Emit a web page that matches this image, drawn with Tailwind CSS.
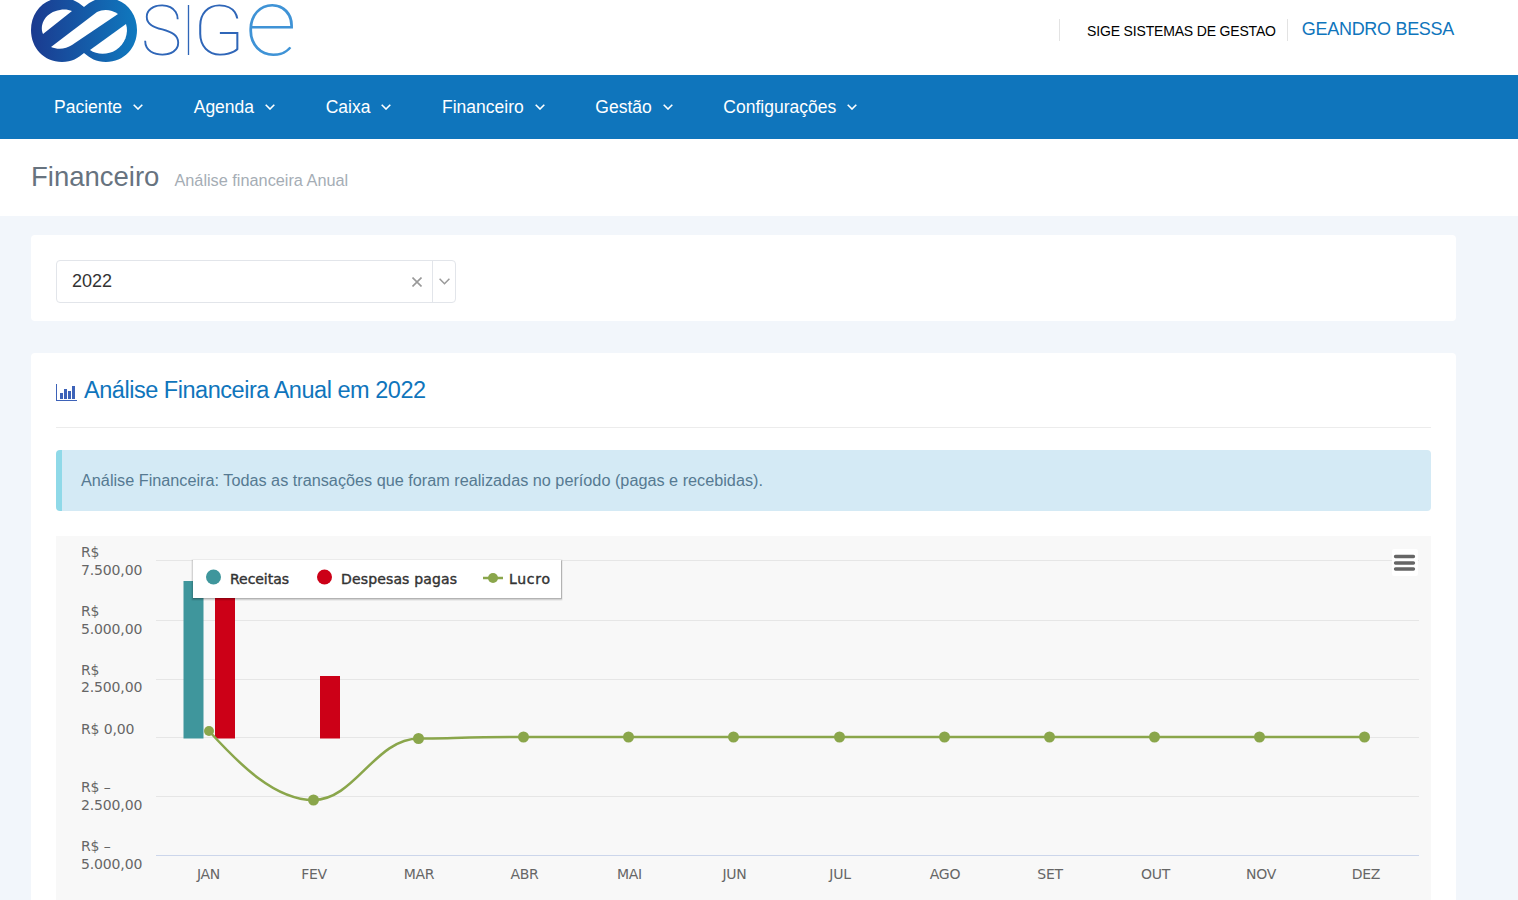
<!DOCTYPE html>
<html lang="pt-BR">
<head>
    <meta charset="UTF-8">
    <title>SIGE - Financeiro</title>
    <script src="https://cdn.jsdelivr.net/npm/@tailwindcss/browser@4"></script>
</head>
<body class="h-[900px] overflow-hidden bg-[#f2f6fb] font-['Liberation_Sans',Arial,sans-serif]">
    <!-- topo -->
    <header class="h-[75px] bg-white flex justify-between pl-[31px] pr-[64px]">
        <svg class="w-[270px] h-[75px]" viewBox="31 0 270 75">
            <defs>
                <linearGradient id="logoGrad" x1="0" x2="1" y1="0" y2="0">
                    <stop offset="0" stop-color="#1b3a8f"/>
                    <stop offset="1" stop-color="#0f79bf"/>
                </linearGradient>
            </defs>
            <path fill="url(#logoGrad)" d="M62 -2C44 -2 31 12 31 30C31 48 44 62 62 62C72 62 78 58 84 53C90 58 96 62 106 62C124 62 137 48 137 30C137 12 124 -2 106 -2C96 -2 90 2 84 7C78 2 72 -2 62 -2Z"/>
            <path fill="#fff" d="M43 34C39 24 46 12 60 10C65 9 69 10 72 11Z"/>
            <path fill="#fff" d="M51 47C58 50 66 49 72 45L118 14C111 9 103 9 97 12Z"/>
            <path fill="#fff" d="M90 50C97 55 108 55 116 50C125 44 129 33 126 24Z"/>
            <text y="55" font-size="70" font-weight="100" fill="#2f66b8" class="font-['Roboto',sans-serif]"><tspan x="141" textLength="41" lengthAdjust="spacingAndGlyphs">S</tspan><tspan x="182" textLength="13" lengthAdjust="spacingAndGlyphs">I</tspan><tspan x="193" textLength="52" lengthAdjust="spacingAndGlyphs">G</tspan><tspan x="245" font-size="95" fill="#3f93d6" textLength="52" lengthAdjust="spacingAndGlyphs">e</tspan></text>
        </svg>
        <div class="flex items-start pt-[19px]">
            <div class="h-[22px] border-l border-[#e3e3e3] pl-[27px] pr-[11px] pt-[4px] text-[14px] tracking-[-0.17px] leading-[16px] text-black">SIGE SISTEMAS DE GESTAO</div>
            <div class="h-[22px] border-l border-[#e3e3e3] pl-[14px] text-[18px] tracking-[-0.3px] leading-[20px] text-[#0f75bc]">GEANDRO BESSA</div>
        </div>
    </header>

    <!-- menu -->
    <nav class="h-[64px] bg-[#0f75bc] flex items-center gap-[50.6px] pl-[54px] text-white text-[17.5px]">
        <a class="flex items-center gap-[11px]">Paciente <svg class="w-[10px] h-[6px]" viewBox="0 0 10 6" fill="none" stroke="currentColor" stroke-width="1.6"><path d="M.7.7 5 5 9.3.7"/></svg></a>
        <a class="flex items-center gap-[11px]">Agenda <svg class="w-[10px] h-[6px]" viewBox="0 0 10 6" fill="none" stroke="currentColor" stroke-width="1.6"><path d="M.7.7 5 5 9.3.7"/></svg></a>
        <a class="flex items-center gap-[11px]">Caixa <svg class="w-[10px] h-[6px]" viewBox="0 0 10 6" fill="none" stroke="currentColor" stroke-width="1.6"><path d="M.7.7 5 5 9.3.7"/></svg></a>
        <a class="flex items-center gap-[11px]">Financeiro <svg class="w-[10px] h-[6px]" viewBox="0 0 10 6" fill="none" stroke="currentColor" stroke-width="1.6"><path d="M.7.7 5 5 9.3.7"/></svg></a>
        <a class="flex items-center gap-[11px]">Gestão <svg class="w-[10px] h-[6px]" viewBox="0 0 10 6" fill="none" stroke="currentColor" stroke-width="1.6"><path d="M.7.7 5 5 9.3.7"/></svg></a>
        <a class="flex items-center gap-[11px]">Configurações <svg class="w-[10px] h-[6px]" viewBox="0 0 10 6" fill="none" stroke="currentColor" stroke-width="1.6"><path d="M.7.7 5 5 9.3.7"/></svg></a>
    </nav>

    <!-- titulo da pagina -->
    <div class="h-[77px] bg-white flex items-baseline gap-[15px] pl-[31px] pt-[21px]">
        <h1 class="text-[27.5px] leading-[34px] text-[#67737f]">Financeiro</h1>
        <span class="text-[16.3px] text-[#a5adb5]">Análise financeira Anual</span>
    </div>

    <main class="w-[1425px] ml-[31px] pt-[19px] flex flex-col gap-[32px]">
        <section class="h-[86px] bg-white rounded-[4px] pt-[25px] pl-[25px]">
            <div class="w-[400px] h-[43px] flex items-center border border-[#e2e5ea] rounded-[4px] pl-[15px] text-[18px] text-[#333]">
                <span class="flex-1">2022</span>
                <svg class="w-[10px] h-[10px] mr-[10px] text-[#999]" viewBox="0 0 10 10" fill="none" stroke="currentColor" stroke-width="1.6"><path d="M.5.5l9 9M9.5.5l-9 9"/></svg>
                <div class="w-[23px] h-full border-l border-[#e2e5ea] flex items-center justify-center">
                    <svg class="w-[11px] h-[7px] text-[#999]" viewBox="0 0 11 7" fill="none" stroke="currentColor" stroke-width="1.5"><path d="M.6.8 5.5 5.7 10.4.8"/></svg>
                </div>
            </div>
        </section>

        <section class="bg-white rounded-[4px] px-[25px] pt-[23px] h-[700px]">
            <div class="h-[52px] flex items-start gap-[7px] border-b border-[#ececec]">
                <svg class="w-[21px] h-[17px] mt-[8px] text-[#3d62b8]" viewBox="0 0 21 17" fill="currentColor">
                    <path d="M0 0h1v16h20v1H0z"/>
                    <rect x="4" y="9" width="3" height="6"/>
                    <rect x="8" y="5" width="3" height="10"/>
                    <rect x="12" y="7" width="3" height="8"/>
                    <rect x="16" y="2" width="3" height="13"/>
                </svg>
                <h2 class="text-[23.5px] tracking-[-0.47px] leading-[28px] text-[#0f75bc]">Análise Financeira Anual em 2022</h2>
            </div>
            <div class="mt-[22px] h-[61px] flex items-center bg-[#d4eaf5] border-l-[6px] border-[#8fd9e8] rounded-[4px] pl-[19px] text-[16.24px] text-[#567a92]">
                Análise Financeira: Todas as transações que foram realizadas no período (pagas e recebidas).
            </div>

            <!-- grafico -->
            <svg class="mt-[25px] block w-[1375px] h-[400px] bg-[#f8f8f8] font-['DejaVu_Sans',sans-serif]" viewBox="56 536 1375 400">
                <g stroke="#e6e6e6" stroke-width="1">
                    <path d="M156 560.5H1419M156 620.5H1419M156 679.5H1419M156 737.5H1419M156 796.5H1419"/>
                </g>
                <path d="M156 855.5H1419" stroke="#ccd6eb"/>

                <g fill="#666666" font-size="14" letter-spacing="-0.15">
                    <text x="81" y="557">R$</text><text x="81" y="575">7.500,00</text>
                    <text x="81" y="616">R$</text><text x="81" y="634">5.000,00</text>
                    <text x="81" y="675">R$</text><text x="81" y="692">2.500,00</text>
                    <text x="81" y="734">R$ 0,00</text>
                    <text x="81" y="792">R$ –</text><text x="81" y="810">2.500,00</text>
                    <text x="81" y="851">R$ –</text><text x="81" y="869">5.000,00</text>
                </g>
                <g fill="#666666" font-size="14" text-anchor="middle" letter-spacing="-0.3">
                    <text x="208.5" y="879">JAN</text>
                    <text x="314" y="879">FEV</text>
                    <text x="419" y="879">MAR</text>
                    <text x="524.5" y="879">ABR</text>
                    <text x="629.5" y="879">MAI</text>
                    <text x="734.5" y="879">JUN</text>
                    <text x="840" y="879">JUL</text>
                    <text x="945" y="879">AGO</text>
                    <text x="1050" y="879">SET</text>
                    <text x="1155.5" y="879">OUT</text>
                    <text x="1261" y="879">NOV</text>
                    <text x="1366" y="879">DEZ</text>
                </g>

                <rect x="183.5" y="581" width="20" height="157.5" fill="#3f969c"/>
                <rect x="215" y="590" width="20" height="148.5" fill="#cc0017"/>
                <rect x="320" y="676" width="20" height="62.5" fill="#cc0017"/>

                <path d="M209 731C240 765 275 800 313.5 800C355 800 375 738.5 419 738.5C440 738.5 480 737 523.5 737H1365" fill="none" stroke="#8aa64b" stroke-width="2.5"/>
                <g fill="#8aa64b">
                    <circle cx="209" cy="731" r="5"/>
                    <circle cx="313.5" cy="800" r="5.5"/>
                    <circle cx="418.5" cy="738.5" r="5.5"/>
                    <circle cx="523.5" cy="737" r="5.5"/>
                    <circle cx="628.5" cy="737" r="5.5"/>
                    <circle cx="733.5" cy="737" r="5.5"/>
                    <circle cx="839.5" cy="737" r="5.5"/>
                    <circle cx="944.5" cy="737" r="5.5"/>
                    <circle cx="1049.5" cy="737" r="5.5"/>
                    <circle cx="1154.5" cy="737" r="5.5"/>
                    <circle cx="1259.5" cy="737" r="5.5"/>
                    <circle cx="1364.5" cy="737" r="5.5"/>
                </g>

                <!-- legenda -->
                <rect x="191" y="559" width="372" height="42" rx="2" fill="#000" fill-opacity="0.05"/>
                <rect x="192" y="560" width="370" height="40" rx="1" fill="#000" fill-opacity="0.1"/>
                <rect x="193" y="561" width="369" height="38" fill="#000" fill-opacity="0.15"/>
                <rect x="193" y="560" width="368" height="38" fill="#fff"/>
                <circle cx="213.5" cy="577" r="7.5" fill="#3f969c"/>
                <circle cx="324.5" cy="577" r="7.5" fill="#cc0017"/>
                <path d="M483 578H503" stroke="#8aa64b" stroke-width="2.5"/>
                <circle cx="493" cy="578" r="5" fill="#8aa64b"/>
                <g fill="#333333" font-size="14" stroke="#333333" stroke-width="0.4">
                    <text x="230" y="584" textLength="59">Receitas</text>
                    <text x="341" y="584" textLength="116">Despesas pagas</text>
                    <text x="509" y="584" textLength="41">Lucro</text>
                </g>

                <!-- botao do menu -->
                <rect x="1392" y="549" width="26" height="27" rx="2" fill="#fff"/>
                <path d="M1395.5 556.5H1413.5M1395.5 563H1413.5M1395.5 569H1413.5" stroke="#666666" stroke-width="3.3" stroke-linecap="round"/>
            </svg>
        </section>
    </main>
</body>
</html>
